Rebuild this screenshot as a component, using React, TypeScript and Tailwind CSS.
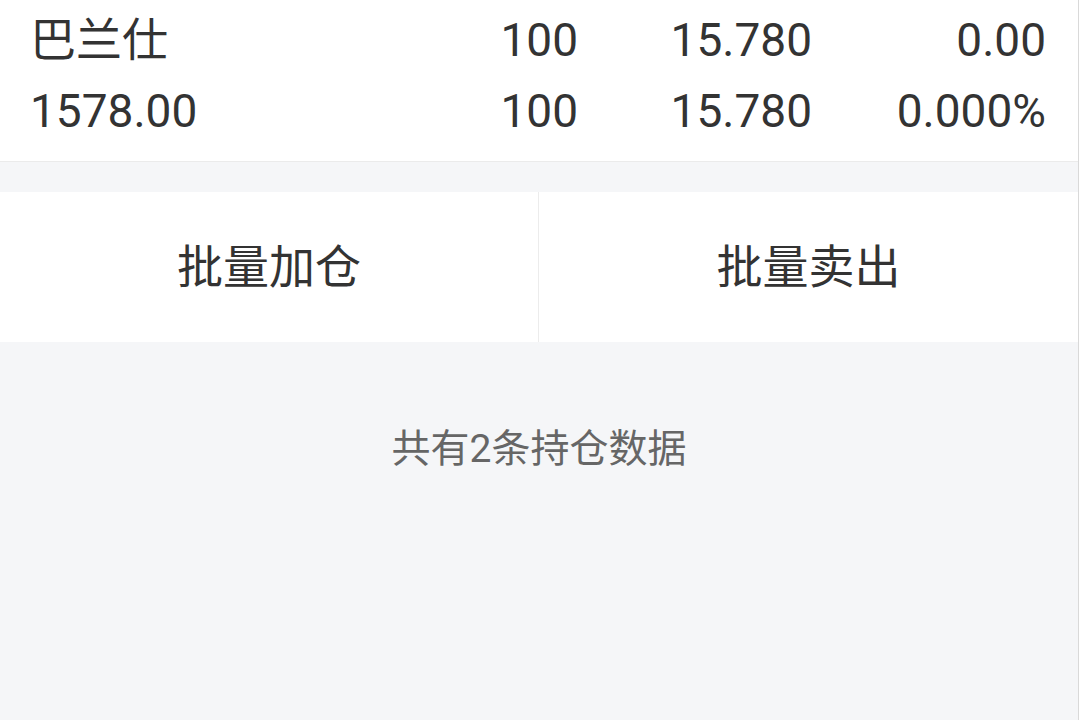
const rows = [
  ['巴兰仕', '100', '15.780', '0.00'],
  ['1578.00', '100', '15.780', '0.000%'],
];

export default function App() {
  return (
    <div
      className="flex h-[720px] w-[1079px] flex-col overflow-hidden border-r border-[#d9d9d9] bg-[#f5f6f8] text-[#333]"
      style={{ fontFamily: 'Roboto, "Noto Sans CJK SC", sans-serif' }}
    >
      <div className="border-b border-[#ebebeb] bg-white pt-[4px] pb-[15px]">
        {rows.map((row, i) => (
          <div key={i} className="flex h-[71px] items-center pl-[30px] pr-[32px] text-[46px] leading-none">
            <span className="flex-1">{row[0]}</span>
            <span className="w-[200px] text-right">{row[1]}</span>
            <span className="w-[234px] text-right">{row[2]}</span>
            <span className="w-[234px] text-right">{row[3]}</span>
          </div>
        ))}
      </div>
      <div className="mt-[30px] flex h-[150px] bg-white text-[46px]">
        <button className="flex w-[539px] items-center justify-center border-r border-[#ececec]">批量加仓</button>
        <button className="flex flex-1 items-center justify-center">批量卖出</button>
      </div>
      <p className="mt-[78px] text-center text-[39px] leading-[58px] text-[#666]">共有2条持仓数据</p>
    </div>
  );
}
